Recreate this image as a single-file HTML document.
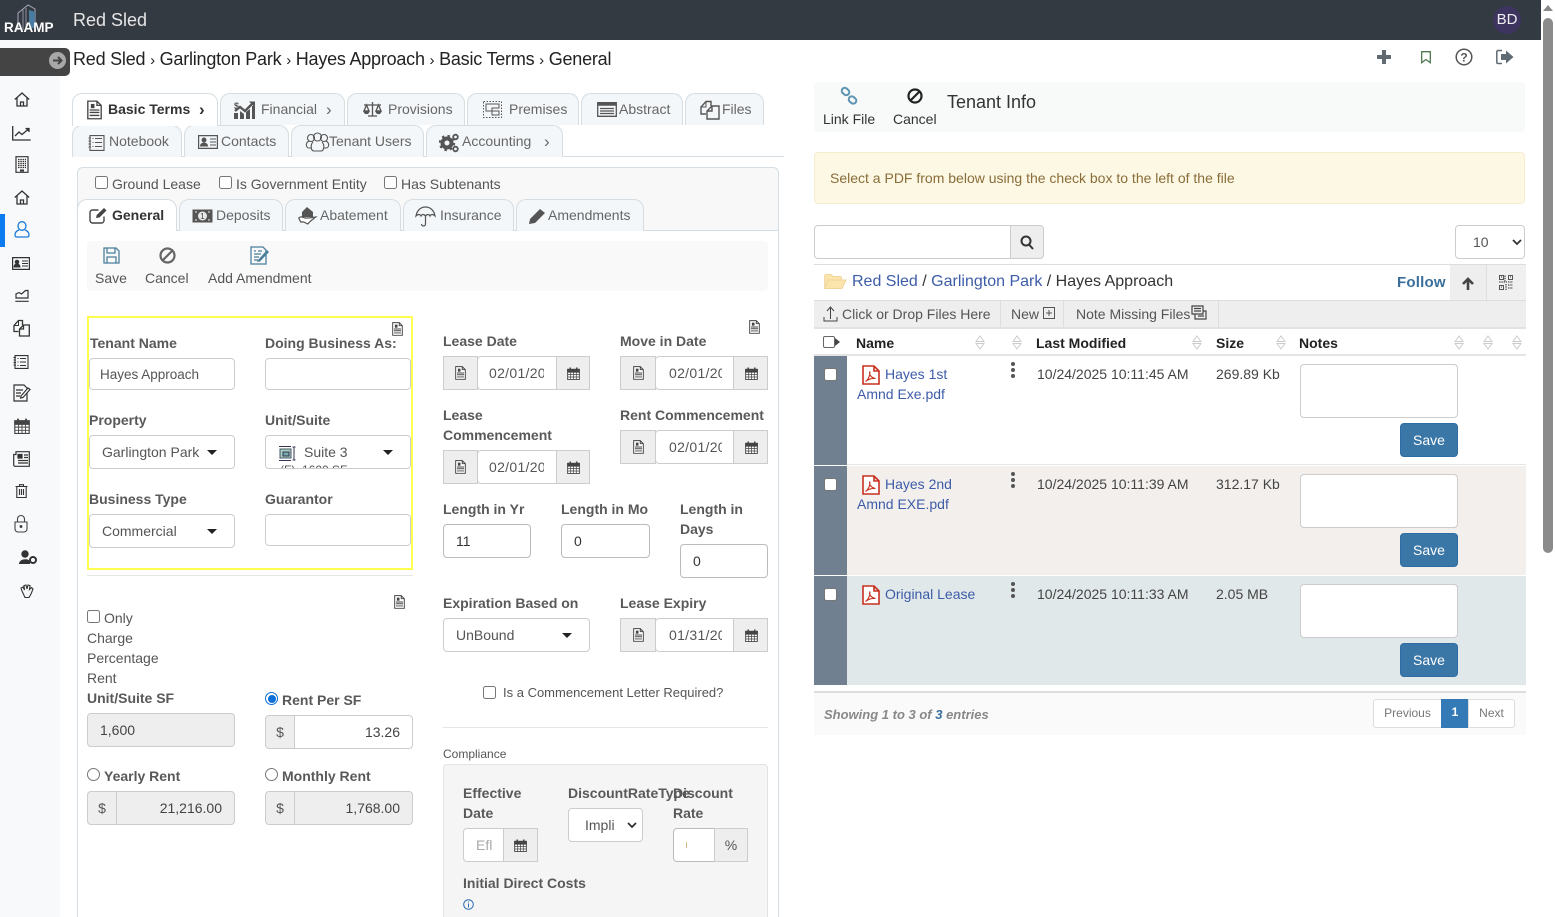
<!DOCTYPE html>
<html><head><meta charset="utf-8"><title>Red Sled</title>
<style>
html,body{margin:0;padding:0;width:1555px;height:917px;overflow:hidden;background:#fff}
body{font:14px/20px "Liberation Sans",Arial,sans-serif;color:#555;position:relative}
body *{box-sizing:border-box}
.a,.t,.l,.b,.tab,.i,svg.ic{position:absolute}
.t,.l{white-space:nowrap}
.l{font-weight:bold;color:#595959}
.b{background:#fff;border:1px solid #ccc;border-radius:4px;color:#555;line-height:30px;padding-left:12px;white-space:nowrap;overflow:hidden}
.tab{background:#f4f7f9;border:1px solid #d5dde2;border-bottom:0;border-radius:10px 10px 0 0;height:32px;line-height:31px;color:#666;white-space:nowrap}
.tab span{position:absolute;top:0}
.tab svg{position:absolute}
.tab.on{background:#fff;color:#333;font-weight:bold}
.add{background:#eee;border:1px solid #ccc;text-align:center;color:#555}
.car{position:absolute;width:0;height:0;border:5px solid transparent;border-top-color:#222;border-bottom:0}
svg{overflow:visible}
.cb{position:absolute;width:13px;height:13px;border:1px solid #767676;border-radius:2.5px;background:#fff}
.rd{position:absolute;width:13px;height:13px;border:1px solid #767676;border-radius:50%;background:#fff}
.lnk{color:#3d5ca8}
.sv{position:absolute;left:1400px;width:58px;height:34px;background:#3a76a6;border:1px solid #2e6da4;border-radius:4px;color:#fff;text-align:center;line-height:32px}
.ta{position:absolute;left:1300px;width:158px;height:54px;background:#fff;border:1px solid #ccc;border-radius:4px}
.sort{position:absolute;width:10px;height:15px}
.d{display:block;overflow:hidden;letter-spacing:.3px}
</style></head><body>
<svg width="0" height="0" style="position:absolute">
<defs>
<symbol id="doc" viewBox="0 0 14 16"><path d="M1.500 .7h7.500l3.500 3.500v11h-11z M9 .7v3.500h3.500" fill="#fff" stroke="#444" stroke-width="1.100"/><path d="M3 8h8M3 10h8M3 12.500h8" stroke="#444" stroke-width="1.100"/><path d="M4 3h3v3.500h-3z" fill="#444"/></symbol>
<symbol id="cal" viewBox="0 0 14 14"><path d="M.7 2.500h12.600v11h-12.600z" fill="#fff" stroke="#444"/><path d="M.7 2.500h12.600v3h-12.600z" fill="#444" stroke="#444"/><path d="M3.500 .5v3M10.500 .5v3" stroke="#444" stroke-width="1.600"/><path d="M.7 8h12.600M.7 10.800h12.600M4 5.500v8M7 5.500v8M10 5.500v8" stroke="#444" stroke-width=".8"/></symbol>
<symbol id="pdf" viewBox="0 0 18 20"><path d="M1 1h11l5 5v13h-16z M12 1v5h5" fill="#fff" stroke="#c8301e" stroke-width="1.600"/><path d="M3.500 16.500c3-2 5-7 4.200-10-.6 3 1 6 5.800 7-3.500-.3-7 .5-10 3z" fill="none" stroke="#c8301e" stroke-width="1.100"/></symbol>
<symbol id="sorti" viewBox="0 0 10 15"><path d="M5 1L9 6.500H1zM5 14L1 8.500H9z" fill="none" stroke="#ccc" stroke-width="1"/></symbol>
<symbol id="home" viewBox="0 0 16 15"><path d="M.8 7.500L8 1l7.200 6.500M3 6v8h10V6M6.500 14v-4h3v4" fill="none" stroke="#333" stroke-width="1.300"/></symbol>
</defs></svg>

<!-- header -->
<div class="a" style="left:0;top:0;width:1541px;height:40px;background:#343a42"></div>
<svg class="a" style="left:16px;top:4px" width="22" height="27" viewBox="0 0 22 27"><path d="M2 26V9L12 1l7 4v21" fill="none" stroke="#aab" stroke-width="1"/><path d="M13 6l6 2v16h-6z" fill="#4a7ba0"/><path d="M7 6v20M10 4v22" stroke="#aab" stroke-width=".8"/></svg>
<div class="t" style="left:4px;top:18px;font-size:13.500px;font-weight:bold;color:#fff">RAAMP</div>
<div class="t" style="left:73px;top:10px;font-size:18px;color:#e6e6e6">Red Sled</div>
<div class="a" style="left:1493px;top:6px;width:28px;height:28px;border-radius:50%;background:#3d3460;color:#eee;text-align:center;line-height:28px;font-size:15px">BD</div>

<!-- scrollbar -->
<div class="a" style="left:1541px;top:0;width:14px;height:917px;background:#fff"></div>
<div class="a" style="left:1543px;top:5px;width:0;height:0;border:5px solid transparent;border-bottom:6px solid #888;border-top:0"></div>
<div class="a" style="left:1543px;top:18px;width:10px;height:535px;background:#8b8b8b;border-radius:5px"></div>

<!-- sidebar -->
<div class="a" style="left:0;top:40px;width:60px;height:877px;background:#f8f9fa"></div>
<div class="a" style="left:0;top:214px;width:5px;height:33px;background:#0d7bf0"></div>
<div class="a" style="left:0;top:48px;width:70px;height:28px;background:#444;border-radius:0 5px 5px 0"></div>
<div class="a" style="left:49px;top:52px;width:17px;height:17px;border-radius:50%;background:#a8a8a8"></div>
<svg class="a" style="left:49px;top:52px" width="17" height="17"><path d="M4 8.500h8M9 5l3.500 3.500L9 12" fill="none" stroke="#444" stroke-width="2"/></svg>
<svg class="a" style="left:14px;top:92px" width="16" height="15"><use href="#home"/></svg>
<svg class="a" style="left:12px;top:125px" width="20" height="16" fill="none" stroke="#333" stroke-width="1.300"><path d="M.7 1v14h18"/><path d="M3 11l4-4 3 2.500L16.500 4"/><path d="M13.500 3.500h3.500v3.500" fill="#333"/></svg>
<svg class="a" style="left:15px;top:156px" width="14" height="17" fill="none" stroke="#333"><path d="M1 .7h12v15.600h-12z" stroke-width="1.200"/><path d="M3 3.500h8M3 5.500h8M3 7.500h8M3 9.500h8M3 11.500h8" stroke-width="1.200" stroke-dasharray="1.500 .8"/><path d="M5 14.500h4" stroke-width="2"/></svg>
<svg class="a" style="left:14px;top:190px" width="16" height="15"><use href="#home"/></svg>
<svg class="a" style="left:14px;top:221px" width="16" height="17" fill="none" stroke="#1a7bd8" stroke-width="1.300"><ellipse cx="8" cy="5" rx="4" ry="4.300"/><path d="M5 9c-3 1-4 3-4 5 0 1.500 1 2 2 2h10c1 0 2-.5 2-2 0-2-1-4-4-5"/></svg>
<svg class="a" style="left:12px;top:257px" width="18" height="13" fill="none" stroke="#333"><path d="M.6.600h16.800v11.800H.6z" stroke-width="1.200"/><circle cx="5" cy="5" r="1.800" fill="#333"/><path d="M2 10c0-4 6-4 6 0z" fill="#333"/><path d="M10 4h6M10 6.500h6M10 9h6" stroke-width="1.100"/></svg>
<svg class="a" style="left:15px;top:289px" width="14" height="13" fill="none" stroke="#333" stroke-width="1.200"><path d="M1 9V5l3-1.500L6.500 5 10.500 1.500h2.500V9zM.3 12.300h13.400"/></svg>
<svg class="a" style="left:13px;top:319px" width="17" height="18" fill="none" stroke="#333" stroke-width="1.300"><path d="M5.500 12.500H1V6.500L5.500 1.500H9.500V6"/><path d="M5.500 1.500V6.500H1" stroke-width="1"/><path d="M6.500 17V10L10.500 6H16.300V17zM10.500 6v4h-4" /></svg>
<svg class="a" style="left:13px;top:355px" width="16" height="14" fill="none" stroke="#333" stroke-width="1.100"><path d="M2 .6h13v12.800H2z"/><path d="M4.500 3.500h1M4.500 7h1M4.500 10.500h1M7 3.500h6M7 7h6M7 10.500h6M.5 2.500h2.500M.5 5h2.500M.5 7.500h2.500M.5 10h2.500" /></svg>
<svg class="a" style="left:13px;top:384px" width="18" height="18" fill="none" stroke="#333" stroke-width="1.200"><path d="M1 1h10l3 3v13H1z"/><path d="M3 6h7M3 9h5M3 12h4"/><path d="M8 12l7-8 2 1.500-7 8-2.500.5z" fill="#fff"/></svg>
<svg class="a" style="left:14px;top:418px" width="16" height="16"><use href="#cal"/></svg>
<svg class="a" style="left:13px;top:451px" width="17" height="16" fill="none" stroke="#333" stroke-width="1.200"><path d="M3 .7h13.300v14.600H2.500a1.500 1.500 0 0 1-1.800-1.500V3.500H3z"/><path d="M5 3.500h4v3.500H5z" fill="#333"/><path d="M11 4h4M11 6.500h4M5 9.500h10M5 12h10"/></svg>
<svg class="a" style="left:15px;top:484px" width="13" height="14" fill="none" stroke="#333" stroke-width="1.100"><path d="M.5 2.500h12M4.500 2.500V.7h4v1.800M1.800 2.500v11h9.400v-11M4.500 5v6M6.500 5v6M8.500 5v6"/></svg>
<svg class="a" style="left:14px;top:515px" width="14" height="18" fill="none" stroke="#444" stroke-width="1.100"><path d="M3.500 7V4a3.500 3.500 0 0 1 7 0v3M1 7h12v7a3 3 0 0 1-3 3H4a3 3 0 0 1-3-3z"/><circle cx="7" cy="11.500" r=".9" fill="#333"/></svg>
<svg class="a" style="left:19px;top:550px" width="18" height="15"><circle cx="6" cy="4" r="3.700" fill="#333"/><path d="M0 14c0-6 11-6 11-2v2z" fill="#333"/><circle cx="14" cy="10" r="3" fill="none" stroke="#333" stroke-width="2"/></svg>
<svg class="a" style="left:20px;top:584px" width="15" height="15" fill="none" stroke="#333" stroke-width="1.100"><path d="M2 7L1 4l2-1 1.500 3L4 1.500 6 1l1 4 1-4 2 .5-.5 4 2-2 1.500 1.500-2 5-2 3.500H5z"/></svg>

<!-- breadcrumb -->
<div class="t" style="left:73px;top:49px;font-size:18px;color:#222;letter-spacing:-.22px">Red Sled <span style="font-size:15px">›</span> Garlington Park <span style="font-size:15px">›</span> Hayes Approach <span style="font-size:15px">›</span> Basic Terms <span style="font-size:15px">›</span> General</div>
<svg class="a" style="left:1377px;top:50px" width="14" height="14"><path d="M7 0v14M0 7h14" stroke="#5f6a72" stroke-width="4"/></svg>
<svg class="a" style="left:1421px;top:51px" width="10" height="13" fill="none" stroke="#4f7a4f" stroke-width="1.300"><path d="M.7.700h8.600v11L5 8.500.7 11.700z"/></svg>
<svg class="a" style="left:1455px;top:48px" width="18" height="18"><circle cx="9" cy="9" r="7.800" fill="none" stroke="#555" stroke-width="1.500"/><text x="9" y="13.500" font-size="12" font-weight="bold" text-anchor="middle" fill="#555" font-family="Liberation Sans">?</text></svg>
<svg class="a" style="left:1496px;top:49px" width="18" height="16"><path d="M6 1.500H2a1.200 1.200 0 0 0-1.200 1.200v10.600A1.200 1.200 0 0 0 2 14.500h4" fill="none" stroke="#5f6a72" stroke-width="1.500"/><path d="M5 5h5V1.500L17.500 8 10 14.500V11H5z" fill="#5f6a72"/></svg>

<!-- main tabs -->
<div class="a" style="left:72px;top:156px;width:712px;height:1px;background:#d5dde2"></div>
<div class="tab on" style="left:72px;top:93px;width:146px;height:33px;z-index:2"><svg style="left:13px;top:6px" width="17" height="20"><use href="#doc"/></svg><span style="left:35px">Basic Terms</span><span style="left:126px;font-size:17px">›</span></div>
<div class="tab" style="left:220px;top:93px;width:125px"><svg style="left:13px;top:6px" width="21" height="20"><path d="M0 19v-6h4v6zM6 19v-8l4 3v5zM12 19v-7l4-3v10zM18 19V6h3v13z" fill="#555"/><path d="M1 11l5-4 5 4 8-8" fill="none" stroke="#555" stroke-width="2.400"/><path d="M15 1.500h6v6z" fill="#555"/><text x="0" y="9" font-size="9" font-weight="bold" fill="#555" font-family="Liberation Sans">$</text></svg><span style="left:40px">Financial</span><span style="left:105px;font-size:17px">›</span></div>
<div class="tab" style="left:347px;top:93px;width:118px"><svg style="left:15px;top:8px" width="19" height="15" fill="none" stroke="#555" stroke-width="1.300"><path d="M9.500 0v14M5 14h9M1 3h17M3.500 3L1 9h5zM15.500 3L13 9h5z"/><path d="M1 9a2.500 2.500 0 0 0 5 0zM13 9a2.500 2.500 0 0 0 5 0z" fill="#555"/></svg><span style="left:40px">Provisions</span></div>
<div class="tab" style="left:467px;top:93px;width:112px"><svg style="left:15px;top:7px" width="19" height="17" fill="none" stroke="#555"><path d="M.5.500h18v16H.5z" stroke-dasharray="1.500 1.500"/><path d="M3 3h13v4H9v3H3zM9 10h7v4H9z"/></svg><span style="left:41px">Premises</span></div>
<div class="tab" style="left:581px;top:93px;width:102px"><svg style="left:15px;top:8px" width="20" height="15" fill="none"><path d="M.7.700h18.600v13.600H.7z" stroke="#555" stroke-width="1.300"/><path d="M.7.700h18.600v3H.7z" fill="#555"/><path d="M3 6.500h14M3 9h14M3 11.500h14" stroke="#555" stroke-width="1.200"/></svg><span style="left:37px">Abstract</span></div>
<div class="tab" style="left:685px;top:93px;width:79px"><svg style="left:14px;top:6px" width="20" height="20" fill="none" stroke="#555" stroke-width="1.400"><path d="M6 14H1V7L6 1.500H11V6"/><path d="M6 1.500V7H1" stroke-width="1"/><path d="M7 19V11L12 6H19V19zM12 6v5H7"/></svg><span style="left:36px">Files</span></div>
<div class="tab" style="left:72px;top:125px;width:110px"><svg style="left:15px;top:9px" width="17" height="16"><g fill="none" stroke="#555" stroke-width="1.100"><path d="M2 .6h14v14.800H2z"/><path d="M4.500 3.500h1M4.500 7.500h1M4.500 11.500h1M7 3.500h7M7 7.500h7M7 11.500h7M.5 3h2.500M.5 6h2.500M.5 9h2.500M.5 12h2.500"/></g></svg><span style="left:36px">Notebook</span></div>
<div class="tab" style="left:184px;top:125px;width:105px"><svg style="left:13px;top:9px" width="20" height="14" fill="none" stroke="#555"><path d="M.6.600h18.800v12.800H.6z" stroke-width="1.200"/><circle cx="6" cy="5" r="2" fill="#555"/><path d="M2.500 11c0-4 7-4 7 0z" fill="#555"/><path d="M12 4h6M12 7h6M12 10h6"/></svg><span style="left:36px">Contacts</span></div>
<div class="tab" style="left:291px;top:125px;width:133px"><svg style="left:14px;top:6px" width="23" height="21" fill="none" stroke="#555" stroke-width="1.100"><circle cx="5" cy="6" r="3.500"/><circle cx="11.500" cy="5" r="4"/><circle cx="18" cy="6" r="3.500"/><path d="M3 9c-4 2-3 7 0 7h2M20 9c4 2 3 7 0 7h-2M7 10c-3 3-2 9 1 9h7c3 0 4-6 1-9"/></svg><span style="left:37px">Tenant Users</span></div>
<div class="tab" style="left:426px;top:125px;width:137px"><svg style="left:12px;top:7px" width="21" height="20"><circle cx="8" cy="10" r="4.500" fill="none" stroke="#555" stroke-width="4"/><circle cx="8" cy="10" r="7.200" fill="none" stroke="#555" stroke-width="2" stroke-dasharray="2.500 3.200"/><circle cx="16.500" cy="4" r="2.300" fill="none" stroke="#555" stroke-width="1.800"/><circle cx="16.500" cy="16" r="2.300" fill="none" stroke="#555" stroke-width="1.800"/></svg><span style="left:35px">Accounting</span><span style="left:117px;font-size:17px">›</span></div>

<!-- inner panel -->
<div class="a" style="left:77px;top:167px;width:702px;height:760px;border:1px solid #d5dde2;border-radius:6px 6px 0 0;background:#fff"></div>
<div class="a" style="left:78px;top:168px;width:700px;height:62px;background:#f8f8f8;border-radius:6px 6px 0 0"></div>
<div class="a" style="left:78px;top:230px;width:700px;height:1px;background:#d5dde2"></div>
<div class="cb" style="left:95px;top:176px"></div><div class="t" style="left:112px;top:174px">Ground Lease</div>
<div class="cb" style="left:219px;top:176px"></div><div class="t" style="left:236px;top:174px">Is Government Entity</div>
<div class="cb" style="left:384px;top:176px"></div><div class="t" style="left:401px;top:174px">Has Subtenants</div>

<div class="tab on" style="left:77px;top:199px;width:100px;z-index:2;height:32px"><svg style="left:11px;top:7px" width="20" height="17" fill="none" stroke="#444" stroke-width="1.400"><path d="M15 9.500v4a2.500 2.500 0 0 1-2.500 2.500h-9A2.500 2.500 0 0 1 1 13.500v-8A2.500 2.500 0 0 1 3.500 3h6"/><path d="M7 11l.7-3L15 1l2.500 2.500-7 7z" fill="#444" stroke="none"/></svg><span style="left:34px">General</span></div>
<div class="tab" style="left:179px;top:199px;width:104px"><svg style="left:12px;top:9px" width="21" height="14"><path d="M.5.500h20v13H.5z" fill="#555"/><circle cx="10.500" cy="7" r="4.500" fill="#e8e8e8"/><path d="M3 3h2M3 11h2M16 3h2M16 11h2" stroke="#eee"/><text x="10.500" y="10" font-size="8" text-anchor="middle" fill="#444" font-family="Liberation Sans">1</text></svg><span style="left:36px">Deposits</span></div>
<div class="tab" style="left:285px;top:199px;width:116px"><svg style="left:12px;top:6px" width="20" height="20"><path d="M4 11V6l5-5 6 5v5z" fill="#555"/><path d="M.7 12c2-2 4-1 6 0h4l7-1-5 4-3 3-4-2-3 0z" fill="#fff" stroke="#555" stroke-width="1.200"/></svg><span style="left:34px">Abatement</span></div>
<div class="tab" style="left:403px;top:199px;width:111px"><svg style="left:11px;top:6px" width="21" height="21" fill="none" stroke="#555" stroke-width="1.200"><path d="M1 10C2 4 6 1 10.500 1S19 4 20 10c-2-2-4-2-5 0-1-2-3-2-4.500 0C9 8 7 8 6 10c-1-2-3-2-5 0z"/><path d="M10.500 10v8a2 2 0 0 1-4 0"/></svg><span style="left:36px">Insurance</span></div>
<div class="tab" style="left:516px;top:199px;width:128px"><svg style="left:12px;top:8px" width="17" height="16"><path d="M0 16l1-5L11 1l5 4L6 15z" fill="#555"/></svg><span style="left:31px">Amendments</span></div>

<!-- toolbar -->
<div class="a" style="left:87px;top:241px;width:681px;height:50px;background:#f9f9f9;border-radius:4px"></div>
<svg class="a" style="left:103px;top:247px" width="17" height="17" fill="none" stroke="#4a7f9c" stroke-width="1.300"><path d="M1 1h12l3 3v12H1z"/><path d="M4 1v5h8V1M4 16v-6h9v6" /></svg>
<div class="t" style="left:95px;top:268px">Save</div>
<svg class="a" style="left:159px;top:247px" width="17" height="17" fill="none" stroke="#666" stroke-width="2.200"><circle cx="8.500" cy="8.500" r="7"/><path d="M3.500 13.500l10-10"/></svg>
<div class="t" style="left:145px;top:268px">Cancel</div>
<svg class="a" style="left:250px;top:246px" width="20" height="19" fill="none" stroke="#4a7f9c" stroke-width="1.300"><path d="M1 1h12l3 3v14H1z"/><path d="M4 5h2M8 5h4M4 8h7M4 11h5M4 14h4"/><path d="M8 14l9-10 2 2-9 9.500-3 .5z" fill="#4a7f9c" stroke="none"/></svg>
<div class="t" style="left:208px;top:268px">Add Amendment</div>

<!-- yellow -->
<div class="a" style="left:87px;top:316px;width:326px;height:254px;border:2px solid #ffff4d"></div>
<div class="a" style="left:87px;top:575px;width:326px;height:1px;background:#e6e6e6"></div>
<svg class="a" style="left:391px;top:322px" width="13" height="14"><use href="#doc"/></svg>
<div class="l" style="left:90px;top:333px">Tenant Name</div>
<div class="l" style="left:265px;top:333px">Doing Business As:</div>
<div class="b" style="left:89px;top:358px;width:146px;height:32px;font-size:13.500px;padding-left:10px;line-height:31px">Hayes Approach</div>
<div class="b" style="left:265px;top:358px;width:146px;height:32px"></div>
<div class="l" style="left:89px;top:410px">Property</div>
<div class="l" style="left:265px;top:410px">Unit/Suite</div>
<div class="b" style="left:89px;top:435px;width:146px;height:34px;line-height:32px">Garlington Park<i class="car" style="left:117px;top:14px"></i></div>
<div class="b" style="left:265px;top:435px;width:146px;height:34px;line-height:32px;padding-left:38px">Suite 3<div style="position:absolute;left:14px;top:27px;font-size:12px;line-height:14px">(F) &nbsp;1600 SF</div><i class="car" style="left:117px;top:14px"></i>
<svg style="position:absolute;left:12px;top:10px" width="17" height="15" fill="none" stroke="#335"><path d="M1 .5h12M1 14.500h12M16 1v13M14.500 1h3M14.500 14h3"/><path d="M2 3h11v9H2z" fill="#a8d0c0" stroke="#456"/><path d="M5 6h6v4H5z" fill="#7aa"/></svg></div>
<div class="l" style="left:89px;top:489px">Business Type</div>
<div class="l" style="left:265px;top:489px">Guarantor</div>
<div class="b" style="left:89px;top:514px;width:146px;height:34px;line-height:32px">Commercial<i class="car" style="left:117px;top:14px"></i></div>
<div class="b" style="left:265px;top:514px;width:146px;height:32px"></div>

<!-- only charge -->
<svg class="a" style="left:393px;top:595px" width="13" height="14"><use href="#doc"/></svg>
<div class="cb" style="left:87px;top:610px"></div>
<div class="t" style="left:104px;top:608px">Only</div>
<div class="t" style="left:87px;top:628px">Charge</div>
<div class="t" style="left:87px;top:648px">Percentage</div>
<div class="t" style="left:87px;top:668px">Rent</div>
<div class="l" style="left:87px;top:688px">Unit/Suite SF</div>
<div class="b" style="left:87px;top:713px;width:148px;height:34px;background:#eee;line-height:32px;color:#444">1,600</div>
<div class="rd" style="left:265px;top:692px;border-color:#0b6fd6"><div style="position:absolute;left:1.500px;top:1.500px;width:8px;height:8px;border-radius:50%;background:#0b6fd6"></div></div>
<div class="l" style="left:282px;top:690px">Rent Per SF</div>
<div class="add a" style="left:265px;top:715px;width:30px;height:34px;line-height:32px;border-radius:4px 0 0 4px">$</div>
<div class="b" style="left:294px;top:715px;width:119px;height:34px;line-height:32px;border-radius:0 4px 4px 0;text-align:right;padding:0 12px;color:#444">13.26</div>
<div class="rd" style="left:87px;top:768px"></div>
<div class="l" style="left:104px;top:766px">Yearly Rent</div>
<div class="rd" style="left:265px;top:768px"></div>
<div class="l" style="left:282px;top:766px">Monthly Rent</div>
<div class="add a" style="left:87px;top:791px;width:30px;height:34px;line-height:32px;border-radius:4px 0 0 4px">$</div>
<div class="b" style="left:116px;top:791px;width:119px;height:34px;line-height:32px;background:#eee;border-radius:0 4px 4px 0;text-align:right;padding:0 12px;color:#444">21,216.00</div>
<div class="add a" style="left:265px;top:791px;width:30px;height:34px;line-height:32px;border-radius:4px 0 0 4px">$</div>
<div class="b" style="left:294px;top:791px;width:119px;height:34px;line-height:32px;background:#eee;border-radius:0 4px 4px 0;text-align:right;padding:0 12px;color:#444">1,768.00</div>

<!-- right column of left form -->
<svg class="a" style="left:748px;top:320px" width="13" height="14"><use href="#doc"/></svg>
<div class="l" style="left:443px;top:331px">Lease Date</div>
<div class="l" style="left:620px;top:331px">Move in Date</div>

<div class="add a" style="left:443px;top:356px;width:35px;height:34px"><svg style="position:absolute;left:10px;top:9px" width="13" height="14"><use href="#doc"/></svg></div>
<div class="b" style="left:477px;top:356px;width:80px;height:34px;line-height:32px;padding-left:11px;border-radius:4px 0 0 4px"><span class="d" style="width:55px">02/01/2025</span></div>
<div class="add a" style="left:556px;top:356px;width:34px;height:34px"><svg style="position:absolute;left:10px;top:10px" width="13" height="13"><use href="#cal"/></svg></div>

<div class="add a" style="left:620px;top:356px;width:36px;height:34px"><svg style="position:absolute;left:11px;top:9px" width="13" height="14"><use href="#doc"/></svg></div>
<div class="b" style="left:655px;top:356px;width:79px;height:34px;line-height:32px;padding-left:13px;border-radius:4px 0 0 4px"><span class="d" style="width:53px">02/01/2025</span></div>
<div class="add a" style="left:733px;top:356px;width:35px;height:34px"><svg style="position:absolute;left:11px;top:10px" width="13" height="13"><use href="#cal"/></svg></div>

<div class="l" style="left:443px;top:405px">Lease</div>
<div class="l" style="left:443px;top:425px">Commencement</div>
<div class="l" style="left:620px;top:405px">Rent Commencement</div>

<div class="add a" style="left:443px;top:450px;width:35px;height:34px"><svg style="position:absolute;left:10px;top:9px" width="13" height="14"><use href="#doc"/></svg></div>
<div class="b" style="left:477px;top:450px;width:80px;height:34px;line-height:32px;padding-left:11px;border-radius:4px 0 0 4px"><span class="d" style="width:55px">02/01/2025</span></div>
<div class="add a" style="left:556px;top:450px;width:34px;height:34px"><svg style="position:absolute;left:10px;top:10px" width="13" height="13"><use href="#cal"/></svg></div>

<div class="add a" style="left:620px;top:430px;width:36px;height:34px"><svg style="position:absolute;left:11px;top:9px" width="13" height="14"><use href="#doc"/></svg></div>
<div class="b" style="left:655px;top:430px;width:79px;height:34px;line-height:32px;padding-left:13px;border-radius:4px 0 0 4px"><span class="d" style="width:53px">02/01/2025</span></div>
<div class="add a" style="left:733px;top:430px;width:35px;height:34px"><svg style="position:absolute;left:11px;top:10px" width="13" height="13"><use href="#cal"/></svg></div>

<div class="l" style="left:443px;top:499px">Length in Yr</div>
<div class="l" style="left:561px;top:499px">Length in Mo</div>
<div class="l" style="left:680px;top:499px">Length in</div>
<div class="l" style="left:680px;top:519px">Days</div>
<div class="b" style="left:443px;top:524px;width:88px;height:34px;line-height:32px;color:#333;border-color:#bbb">11</div>
<div class="b" style="left:561px;top:524px;width:89px;height:34px;line-height:32px;color:#333;border-color:#bbb">0</div>
<div class="b" style="left:680px;top:544px;width:88px;height:34px;line-height:32px;color:#333;border-color:#bbb">0</div>

<div class="l" style="left:443px;top:593px">Expiration Based on</div>
<div class="l" style="left:620px;top:593px">Lease Expiry</div>
<div class="b" style="left:443px;top:618px;width:147px;height:34px;line-height:32px">UnBound<i class="car" style="left:118px;top:14px"></i></div>
<div class="add a" style="left:620px;top:618px;width:36px;height:34px"><svg style="position:absolute;left:11px;top:9px" width="13" height="14"><use href="#doc"/></svg></div>
<div class="b" style="left:655px;top:618px;width:79px;height:34px;line-height:32px;padding-left:13px;border-radius:4px 0 0 4px"><span class="d" style="width:53px">01/31/2036</span></div>
<div class="add a" style="left:733px;top:618px;width:35px;height:34px"><svg style="position:absolute;left:11px;top:10px" width="13" height="13"><use href="#cal"/></svg></div>

<div class="cb" style="left:483px;top:686px"></div>
<div class="t" style="left:503px;top:683px;font-size:13px">Is a Commencement Letter Required?</div>
<div class="a" style="left:443px;top:727px;width:325px;height:1px;background:#e6e6e6"></div>
<div class="t" style="left:443px;top:744px;font-size:12px">Compliance</div>
<div class="a" style="left:443px;top:764px;width:325px;height:160px;background:#f5f5f5;border:1px solid #e3e3e3;border-radius:4px"></div>
<div class="l" style="left:463px;top:783px">Effective</div>
<div class="l" style="left:463px;top:803px">Date</div>
<div class="l" style="left:568px;top:783px">DiscountRateType</div>
<div class="l" style="left:673px;top:783px">Discount</div>
<div class="l" style="left:673px;top:803px">Rate</div>
<div class="b" style="left:463px;top:828px;width:41px;height:34px;line-height:32px;color:#aaa;padding-left:12px;border-radius:4px 0 0 4px">Efl</div>
<div class="add a" style="left:503px;top:828px;width:35px;height:34px"><svg style="position:absolute;left:10px;top:10px" width="13" height="13"><use href="#cal"/></svg></div>
<div class="b" style="left:568px;top:808px;width:75px;height:34px;line-height:32px;padding-left:16px">Impli<svg style="position:absolute;left:58px;top:13px" width="10" height="7"><path d="M1 1l4 4 4-4" fill="none" stroke="#333" stroke-width="1.800"/></svg></div>
<div class="b" style="left:673px;top:828px;width:42px;height:34px;border-color:#bbb;border-radius:4px 0 0 4px"><div style="position:absolute;left:12px;top:13px;width:1px;height:6px;background:#d8b48a"></div></div>
<div class="add a" style="left:714px;top:828px;width:34px;height:34px;line-height:32px">%</div>
<div class="l" style="left:463px;top:873px">Initial Direct Costs</div>
<svg class="a" style="left:463px;top:899px" width="11" height="11" fill="none" stroke="#2a6db5"><circle cx="5.500" cy="5.500" r="4.800"/><path d="M5.500 4.500v4M5.500 2.500v1"/></svg>

<!-- right panel -->
<div class="a" style="left:814px;top:82px;width:711px;height:50px;background:#f8f9f9;border-radius:4px"></div>
<svg class="a" style="left:840px;top:87px" width="18" height="18" fill="none" stroke="#5c93b0" stroke-width="2"><rect x="1.500" y="1.500" width="8" height="6" rx="3" transform="rotate(40 5.500 4.500)"/><rect x="8.500" y="10" width="8" height="6" rx="3" transform="rotate(40 12.500 13)"/></svg>
<div class="t" style="left:823px;top:109px;color:#333">Link File</div>
<svg class="a" style="left:907px;top:88px" width="16" height="16" fill="none" stroke="#222" stroke-width="2.200"><circle cx="8" cy="8" r="6.500"/><path d="M3.500 12.500l9-9"/></svg>
<div class="t" style="left:893px;top:109px;color:#333">Cancel</div>
<div class="t" style="left:947px;top:92px;font-size:18px;color:#333">Tenant Info</div>

<div class="a" style="left:814px;top:152px;width:711px;height:52px;background:#fcf8e3;border:1px solid #f5ecd0;border-radius:4px"></div>
<div class="t" style="left:830px;top:168px;color:#8a6d3b">Select a PDF from below using the check box to the left of the file</div>

<div class="a" style="left:814px;top:225px;width:197px;height:34px;border:1px solid #ccc;border-radius:4px 0 0 4px;background:#fff"></div>
<div class="a" style="left:1010px;top:225px;width:34px;height:34px;border:1px solid #ccc;border-radius:0 4px 4px 0;background:#eee"></div>
<svg class="a" style="left:1020px;top:235px" width="14" height="15" fill="none" stroke="#333" stroke-width="2"><circle cx="6" cy="6" r="4.500"/><path d="M9 9.500l4 4.500"/></svg>
<div class="a" style="left:1455px;top:225px;width:70px;height:34px;border:1px solid #ccc;border-radius:4px;background:#fff;padding-left:17px;line-height:32px">10<svg style="position:absolute;left:56px;top:13px" width="10" height="7"><path d="M1 1l4 4 4-4" fill="none" stroke="#333" stroke-width="1.800"/></svg></div>

<div class="a" style="left:814px;top:264px;width:712px;height:1px;background:#ddd"></div>
<svg class="a" style="left:824px;top:273px" width="23" height="17"><path d="M.7 15V3a1.500 1.500 0 0 1 1.500-1.500h5L9 3.500h7a1.500 1.500 0 0 1 1.500 1.500v2" fill="#fbe5ac" stroke="#eed49a"/><path d="M.7 15.500L4 7h18l-4 8.500z" fill="#fbe5ac" stroke="#eed49a"/></svg>
<div class="t" style="left:852px;top:272px;font-size:16px;color:#333"><span class="lnk">Red Sled</span> / <span class="lnk">Garlington Park</span> / Hayes Approach</div>
<div class="t" style="left:1397px;top:273px;font-size:15px;font-weight:bold;color:#3a6f9b;letter-spacing:.2px">Follow</div>
<div class="a" style="left:1450px;top:265px;width:36px;height:35px;background:#eee"></div>
<svg class="a" style="left:1461px;top:277px" width="14" height="14"><path d="M7 13V2M2 7l5-5 5 5" fill="none" stroke="#444" stroke-width="2.600"/></svg>
<div class="a" style="left:1486px;top:265px;width:40px;height:35px;background:#f0f0f0;border-left:1px solid #ddd"></div>
<svg class="a" style="left:1499px;top:275px" width="14" height="15" fill="none" stroke="#555"><path d="M.5.500h4v4h-4zM9.500.500h4v4h-4zM.5 10.500h4v4h-4z"/><path d="M2 2h1M11 2h1M2 12h1M6 .5v6M0 7h8M9 7h5M7 9v6M9 10h5M9 13h5" stroke-width="1.300" stroke-dasharray="1.500 .8"/></svg>

<div class="a" style="left:814px;top:300px;width:712px;height:29px;background:#eee;border-top:1px solid #ddd;border-bottom:2px solid #e2e2e2"></div>
<div class="a" style="left:1000px;top:301px;width:1px;height:26px;background:#ddd"></div>
<div class="a" style="left:1063px;top:301px;width:1px;height:26px;background:#ddd"></div>
<div class="a" style="left:1218px;top:301px;width:1px;height:26px;background:#ddd"></div>
<svg class="a" style="left:823px;top:306px" width="15" height="16" fill="none" stroke="#444"><path d="M7.500 13V1.500M4 5l3.500-4L11 5M1 11v4h13v-4"/></svg>
<div class="t" style="left:842px;top:304px">Click or Drop Files Here</div>
<div class="t" style="left:1011px;top:304px">New</div>
<svg class="a" style="left:1043px;top:307px" width="12" height="12" fill="none" stroke="#555"><path d="M.5.500h11v11H.5zM6 3v6M3 6h6"/></svg>
<div class="t" style="left:1076px;top:304px">Note Missing Files</div>
<svg class="a" style="left:1191px;top:305px" width="17" height="16" fill="none" stroke="#444" stroke-width="1.200"><path d="M1 1h11v8H1zM4 9v5h11V6h-3"/><path d="M3 3.500h7M3 6h7M7 11h6"/></svg>

<!-- table head -->
<div class="a" style="left:814px;top:354px;width:712px;height:2px;background:#e4e4e4"></div>
<div class="a" style="left:823px;top:336px;width:12px;height:12px;border:1px solid #666;border-radius:2px;background:#fff"></div>
<div class="a" style="left:835px;top:338px;width:0;height:0;border:4px solid transparent;border-left:5px solid #444;border-right:0"></div>
<div class="t" style="left:856px;top:333px;font-weight:bold;color:#222">Name</div>
<div class="t" style="left:1036px;top:333px;font-weight:bold;color:#222">Last Modified</div>
<div class="t" style="left:1216px;top:333px;font-weight:bold;color:#222">Size</div>
<div class="t" style="left:1299px;top:333px;font-weight:bold;color:#222">Notes</div>
<svg class="sort" style="left:975px;top:335px"><use href="#sorti"/></svg>
<svg class="sort" style="left:1012px;top:335px"><use href="#sorti"/></svg>
<svg class="sort" style="left:1192px;top:335px"><use href="#sorti"/></svg>
<svg class="sort" style="left:1276px;top:335px"><use href="#sorti"/></svg>
<svg class="sort" style="left:1454px;top:335px"><use href="#sorti"/></svg>
<svg class="sort" style="left:1483px;top:335px"><use href="#sorti"/></svg>
<svg class="sort" style="left:1512px;top:335px"><use href="#sorti"/></svg>

<!-- rows -->
<div class="a" style="left:814px;top:356px;width:712px;height:109px;background:#fff;border-bottom:1px solid #e6e6e6"></div>
<div class="a" style="left:814px;top:466px;width:712px;height:109px;background:#f3efed"></div>
<div class="a" style="left:814px;top:576px;width:712px;height:109px;background:#e1e8ea"></div>
<div class="a" style="left:814px;top:356px;width:33px;height:109px;background:#708090"></div>
<div class="a" style="left:814px;top:466px;width:33px;height:109px;background:#708090"></div>
<div class="a" style="left:814px;top:576px;width:33px;height:109px;background:#708090"></div>

<div class="cb" style="left:824px;top:368px"></div>
<svg class="a" style="left:862px;top:365px" width="18" height="20"><use href="#pdf"/></svg>
<div class="t lnk" style="left:885px;top:364px">Hayes 1st</div>
<div class="t lnk" style="left:857px;top:384px">Amnd Exe.pdf</div>
<svg class="a" style="left:1010px;top:361px" width="6" height="18"><circle cx="3" cy="3" r="2" fill="#555"/><circle cx="3" cy="9" r="2" fill="#555"/><circle cx="3" cy="15" r="2" fill="#555"/></svg>
<div class="t" style="left:1037px;top:364px;color:#444">10/24/2025 10:11:45 AM</div>
<div class="t" style="left:1216px;top:364px;color:#444">269.89 Kb</div>
<div class="ta" style="top:364px"></div>
<div class="sv" style="top:423px">Save</div>

<div class="cb" style="left:824px;top:478px"></div>
<svg class="a" style="left:862px;top:475px" width="18" height="20"><use href="#pdf"/></svg>
<div class="t lnk" style="left:885px;top:474px">Hayes 2nd</div>
<div class="t lnk" style="left:857px;top:494px">Amnd EXE.pdf</div>
<svg class="a" style="left:1010px;top:471px" width="6" height="18"><circle cx="3" cy="3" r="2" fill="#555"/><circle cx="3" cy="9" r="2" fill="#555"/><circle cx="3" cy="15" r="2" fill="#555"/></svg>
<div class="t" style="left:1037px;top:474px;color:#444">10/24/2025 10:11:39 AM</div>
<div class="t" style="left:1216px;top:474px;color:#444">312.17 Kb</div>
<div class="ta" style="top:474px"></div>
<div class="sv" style="top:533px">Save</div>

<div class="cb" style="left:824px;top:588px"></div>
<svg class="a" style="left:862px;top:585px" width="18" height="20"><use href="#pdf"/></svg>
<div class="t lnk" style="left:885px;top:584px">Original Lease</div>
<svg class="a" style="left:1010px;top:581px" width="6" height="18"><circle cx="3" cy="3" r="2" fill="#555"/><circle cx="3" cy="9" r="2" fill="#555"/><circle cx="3" cy="15" r="2" fill="#555"/></svg>
<div class="t" style="left:1037px;top:584px;color:#444">10/24/2025 10:11:33 AM</div>
<div class="t" style="left:1216px;top:584px;color:#444">2.05 MB</div>
<div class="ta" style="top:584px"></div>
<div class="sv" style="top:643px">Save</div>

<!-- footer -->
<div class="a" style="left:814px;top:691px;width:712px;height:44px;background:#fafafa;border-top:2px solid #ddd"></div>
<div class="t" style="left:824px;top:705px;font-size:13px;font-style:italic;font-weight:bold;color:#888">Showing 1 to 3 of <span style="color:#3a6f9b">3</span> entries</div>
<div class="a" style="left:1373px;top:699px;width:69px;height:29px;background:#fff;border:1px solid #ddd;border-radius:3px 0 0 3px;font-size:12px;line-height:26px;text-align:center;color:#777">Previous</div>
<div class="a" style="left:1441px;top:699px;width:28px;height:29px;background:#337ab7;font-size:12px;line-height:27px;text-align:center;color:#fff;font-weight:bold">1</div>
<div class="a" style="left:1468px;top:699px;width:47px;height:29px;background:#fff;border:1px solid #ddd;border-radius:0 3px 3px 0;font-size:12px;line-height:26px;text-align:center;color:#777">Next</div>
</body></html>
